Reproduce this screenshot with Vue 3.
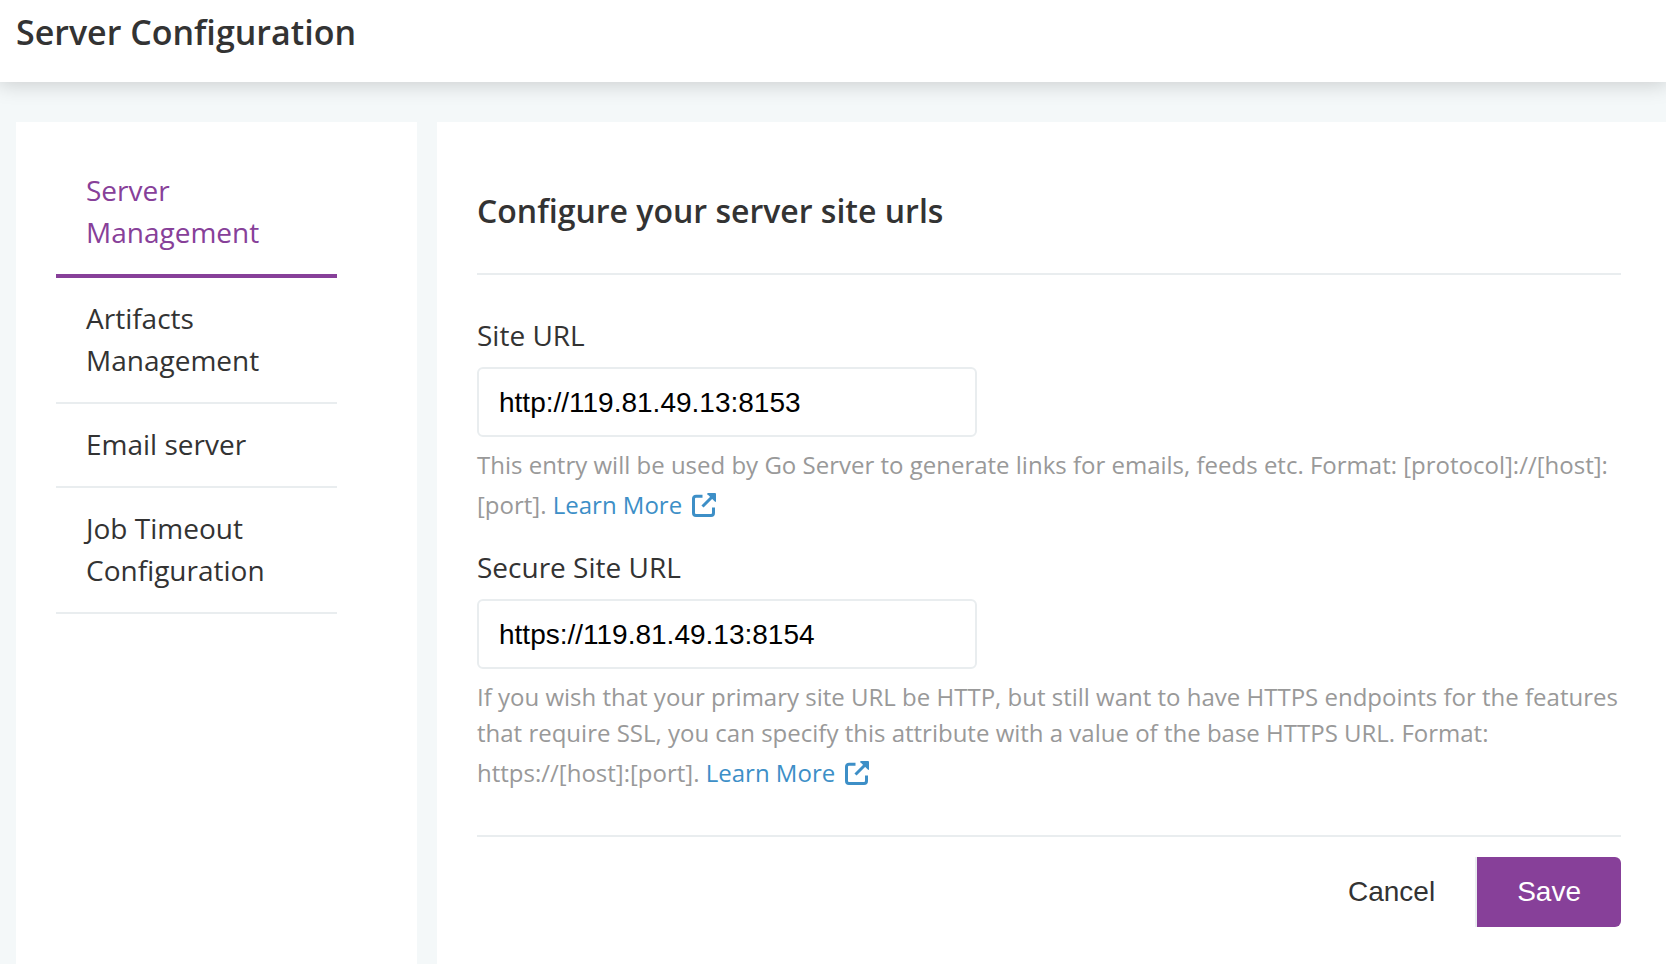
<script setup>
import { ref } from 'vue'

const sections = ['Server Management', 'Artifacts Management', 'Email server', 'Job Timeout Configuration']
const active = ref(sections[0])

const fields = ref([
  {
    id: 'site-url',
    label: 'Site URL',
    value: 'http://119.81.49.13:8153',
    help: 'This entry will be used by Go Server to generate links for emails, feeds etc. Format: [protocol]://[host]:[port].'
  },
  {
    id: 'secure-site-url',
    label: 'Secure Site URL',
    value: 'https://119.81.49.13:8154',
    help: 'If you wish that your primary site URL be HTTP, but still want to have HTTPS endpoints for the features that require SSL, you can specify this attribute with a value of the base HTTPS URL. Format: https://[host]:[port].'
  }
])
</script>

<template>
  <div class="page">
    <header class="page-header">
      <h1>Server Configuration</h1>
    </header>
    <div class="layout">
      <nav class="sidebar" aria-label="Server configuration sections">
        <ul>
          <li v-for="name in sections" :key="name">
            <a href="#" :class="{ active: name === active }" @click.prevent="active = name">{{ name }}</a>
          </li>
        </ul>
      </nav>
      <main class="panel">
        <h2>Configure your server site urls</h2>
        <form @submit.prevent>
          <div v-for="field in fields" :key="field.id" class="field">
            <label :for="field.id">{{ field.label }}</label>
            <input :id="field.id" v-model="field.value" type="text" :aria-describedby="field.id + '-help'" />
            <p :id="field.id + '-help'" class="help">
              {{ field.help }}
              <a href="#">Learn More<svg class="external" viewBox="0 0 24 24" aria-hidden="true">
                <path d="M10.5 3.2H4A2.5 2.5 0 0 0 1.5 5.7V20A2.5 2.5 0 0 0 4 22.5H19A2.5 2.5 0 0 0 21.5 20V14.5" fill="none" stroke="currentColor" stroke-width="3" />
                <path d="M10.5 13.5 20 4" fill="none" stroke="currentColor" stroke-width="3" />
                <path d="M16 0H23A1 1 0 0 1 24 1V8Q24 9.5 22.8 8.6L15.4 1.2Q14.8 0 16 0z" fill="currentColor" />
              </svg></a>
            </p>
          </div>
          <div class="actions">
            <button type="button" class="cancel">Cancel</button>
            <button type="submit" class="save">Save</button>
          </div>
        </form>
      </main>
    </div>
  </div>
</template>

<style>
body {
  margin: 0;
  background: #f4f8f9;
}
</style>

<style scoped>
.page {
  display: flex;
  flex-direction: column;
  min-height: 100vh;
  color: #333;
  font-family: "Open Sans", sans-serif;
  font-size: 28px;
  line-height: 42px;
}
* {
  box-sizing: border-box;
}
.page-header {
  padding: 7px 16px 25px;
  background: #fff;
  box-shadow: 0 0 20px 2px rgba(0, 0, 0, 0.18);
}
h1 {
  margin: 0;
  font-size: 34px;
  line-height: 50px;
  font-weight: 600;
}
.layout {
  display: flex;
  flex: 1;
  gap: 20px;
  padding: 40px 0 0 16px;
}
.sidebar {
  flex: 0 0 401px;
  padding: 28px 80px 28px 40px;
  background: #fff;
}
ul {
  margin: 0;
  padding: 0;
  list-style: none;
}
.sidebar a {
  display: block;
  padding: 19px 30px 21px;
  border-bottom: 2px solid #e9edef;
  color: #333;
  text-decoration: none;
}
.sidebar a.active {
  border-bottom: 4px solid #874099;
  color: #874099;
}
.panel {
  flex: 1;
  min-width: 0;
  padding: 65px 45px 37px 40px;
  background: #fff;
}
h2 {
  margin: 0 0 39px;
  padding-bottom: 38px;
  border-bottom: 2px solid #e9edef;
  font-size: 32px;
  line-height: 48px;
  font-weight: 600;
}
.field {
  margin-bottom: 23px;
}
label {
  display: block;
  margin-bottom: 11px;
}
input {
  display: block;
  width: 500px;
  max-width: 100%;
  height: 70px;
  padding: 2px 20px 0;
  border: 2px solid #e9edef;
  border-radius: 6px;
  background: #fff;
  color: #000;
  font: 28px "Liberation Sans", Arial, sans-serif;
}
.help {
  margin: 10px 0 0;
  color: #999;
  font-size: 24px;
  line-height: 36px;
}
.help a {
  color: #3d8fc7;
  text-decoration: none;
}
.external {
  width: 24px;
  height: 24px;
  margin: 10px 0 0 10px;
  vertical-align: -3px;
}
.actions {
  display: flex;
  justify-content: flex-end;
  margin-top: 44px;
  padding-top: 20px;
  border-top: 2px solid #e9edef;
}
button {
  height: 70px;
  padding: 0 40px;
  border: 0;
  font: 28px "Liberation Sans", Arial, sans-serif;
  cursor: pointer;
}
.cancel {
  border-right: 2px solid #e9edef;
  background: #fff;
  color: #333;
}
.save {
  border-radius: 0 6px 6px 0;
  background: #874099;
  color: #fff;
}
</style>
